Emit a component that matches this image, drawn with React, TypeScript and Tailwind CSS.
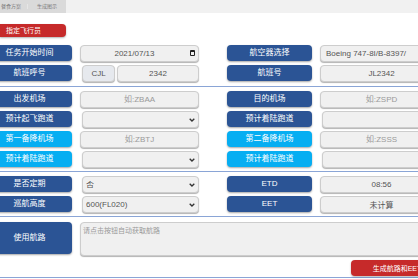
import React from "react";

type Tone = "blue" | "cyan";

const Label: React.FC<{ tone?: Tone; tall?: boolean; children: React.ReactNode }> = ({
    tone = "blue",
    tall,
    children,
}) => (
    <div
        className={`w-[85px] shrink-0 rounded-[4px] flex items-center justify-center text-white text-[8px] shadow-[0_1px_2px_rgba(0,0,0,0.35)] ${
            tall ? "h-[32px]" : "h-[16px]"
        } ${tone === "cyan" ? "bg-[#06aef2]" : "bg-[#2b5495]"}`}
    >
        {children}
    </div>
);

const boxCls =
    "block h-[17px] w-full rounded-[4px] border border-[#cdcdcd] bg-[#f0f0f0] text-[8px] leading-none text-[#555] shadow-[0_1px_1px_rgba(0,0,0,0.3)] outline-none placeholder:text-[#9a9a9a]";

const TextBox: React.FC<{ value?: string; placeholder?: string; left?: boolean }> = ({
    value,
    placeholder,
    left,
}) => (
    <input
        readOnly
        defaultValue={value}
        placeholder={placeholder}
        className={`${boxCls} ${left ? "text-left pl-[5px]" : "text-center"}`}
    />
);

const Chevron = () => (
    <svg
        width="6"
        height="4"
        viewBox="0 0 6 4"
        className="absolute right-[4px] top-[7px] pointer-events-none"
    >
        <path d="M0.7 0.7 L3 3 L5.3 0.7" stroke="#333" strokeWidth="1.3" fill="none" />
    </svg>
);

const SelectBox: React.FC<{ value?: string }> = ({ value }) => (
    <div className="relative ml-[2px] w-full">
        <select
            defaultValue={value ?? ""}
            className={`${boxCls} appearance-none text-left pl-[3px]`}
        >
            <option value={value ?? ""}>{value ?? ""}</option>
        </select>
        <Chevron />
    </div>
);

const DateBox: React.FC<{ value: string }> = ({ value }) => (
    <div className="relative w-full">
        <input readOnly defaultValue={value} className={`${boxCls} text-center pr-[10px]`} />
        <div className="absolute right-[4px] top-[5px] w-[5px] h-[6px] border border-[#222] border-t-[2px] rounded-[1px] pointer-events-none" />
    </div>
);

const Row: React.FC<{ children: React.ReactNode }> = ({ children }) => (
    <div className="flex items-start gap-[8px] h-[17px]">{children}</div>
);

const gridCls = "ml-[-13px] grid grid-cols-[212px_216px] gap-x-[28px] gap-y-[3px]";

const App: React.FC = () => {
    return (
        <div className="w-[418px] h-[279px] overflow-hidden bg-white text-[8px] leading-none font-['Liberation_Sans','Noto_Sans_CJK_SC',sans-serif]">
            {/* tabs */}
            <div className="h-[13px] bg-[#f1f1f1] flex">
                <div className="w-[66px] bg-[#dadada] flex items-center text-[5px] text-[#7a7a7a]">
                    <span className="w-[28px] pl-[1px] border-r border-[#e6e6e6]">餐食方案</span>
                    <span className="pl-[9px]">生成图示</span>
                </div>
            </div>

            <div className="pt-[11px]">
                <button className="block w-[66px] h-[13px] rounded-r-[4px] bg-[#c62a2a] text-white text-[7px] leading-none text-left pl-[6px] shadow-[0_1px_2px_rgba(0,0,0,0.3)]">
                    指定飞行员
                </button>
            </div>

            {/* 基本信息 */}
            <div className="mt-[8px] pb-[4px] border-b border-[#8aa5d6]">
                <div className={gridCls}>
                    <Row>
                        <Label>任务开始时间</Label>
                        <DateBox value="2021/07/13" />
                    </Row>
                    <Row>
                        <Label>航空器选择</Label>
                        <TextBox value="Boeing 747-8I/B-8397/" left />
                    </Row>
                    <Row>
                        <Label>航班呼号</Label>
                        <div className="flex gap-[2px] w-full">
                            <input
                                readOnly
                                defaultValue="CJL"
                                className={`${boxCls} ml-[2px] !w-[33px] shrink-0 !bg-[#e6e9ee] text-center`}
                            />
                            <TextBox value="2342" />
                        </div>
                    </Row>
                    <Row>
                        <Label>航班号</Label>
                        <TextBox value="JL2342" />
                    </Row>
                </div>
            </div>

            {/* 机场 */}
            <div className="pt-[4px] pb-[3px] border-b border-[#8aa5d6]">
                <div className={gridCls}>
                    <Row>
                        <Label>出发机场</Label>
                        <TextBox placeholder="如:ZBAA" />
                    </Row>
                    <Row>
                        <Label>目的机场</Label>
                        <TextBox placeholder="如:ZSPD" />
                    </Row>
                    <Row>
                        <Label>预计起飞跑道</Label>
                        <SelectBox />
                    </Row>
                    <Row>
                        <Label>预计着陆跑道</Label>
                        <SelectBox />
                    </Row>
                    <Row>
                        <Label tone="cyan">第一备降机场</Label>
                        <TextBox placeholder="如:ZBTJ" />
                    </Row>
                    <Row>
                        <Label tone="cyan">第二备降机场</Label>
                        <TextBox placeholder="如:ZSSS" />
                    </Row>
                    <Row>
                        <Label tone="cyan">预计着陆跑道</Label>
                        <SelectBox />
                    </Row>
                    <Row>
                        <Label tone="cyan">预计着陆跑道</Label>
                        <SelectBox />
                    </Row>
                </div>
            </div>

            {/* 计划 */}
            <div className="pt-[4px] pb-[3px] border-b border-[#8aa5d6]">
                <div className={gridCls}>
                    <Row>
                        <Label>是否定期</Label>
                        <SelectBox value="否" />
                    </Row>
                    <Row>
                        <Label>ETD</Label>
                        <TextBox value="08:56" />
                    </Row>
                    <Row>
                        <Label>巡航高度</Label>
                        <SelectBox value="600(FL020)" />
                    </Row>
                    <Row>
                        <Label>EET</Label>
                        <TextBox value="未计算" />
                    </Row>
                </div>
            </div>

            {/* 航路 */}
            <div className="pt-[5px] pb-[1px] border-b border-[#8aa5d6]">
                <div className="ml-[-13px] w-[456px] flex items-start gap-[8px]">
                    <div className="pt-[0px]">
                        <Label tall>使用航路</Label>
                    </div>
                    <textarea
                        readOnly
                        placeholder="请点击按钮自动获取航路"
                        className="block h-[34px] flex-1 resize-none rounded-[4px] border border-[#cdcdcd] bg-[#f0f0f0] text-[7px] leading-[9px] text-[#555] pl-[2px] pt-[3px] shadow-[0_1px_1px_rgba(0,0,0,0.3)] outline-none placeholder:text-[#9a9a9a]"
                    />
                </div>
                <div className="ml-[-13px] w-[456px] flex justify-end mt-[4px]">
                    <button className="block w-[92px] h-[16px] rounded-[4px] bg-[#c62a2a] text-white text-[7px] leading-none shadow-[0_1px_2px_rgba(0,0,0,0.3)]">
                        生成航路和EET
                    </button>
                </div>
            </div>
        </div>
    );
};

export default App;
